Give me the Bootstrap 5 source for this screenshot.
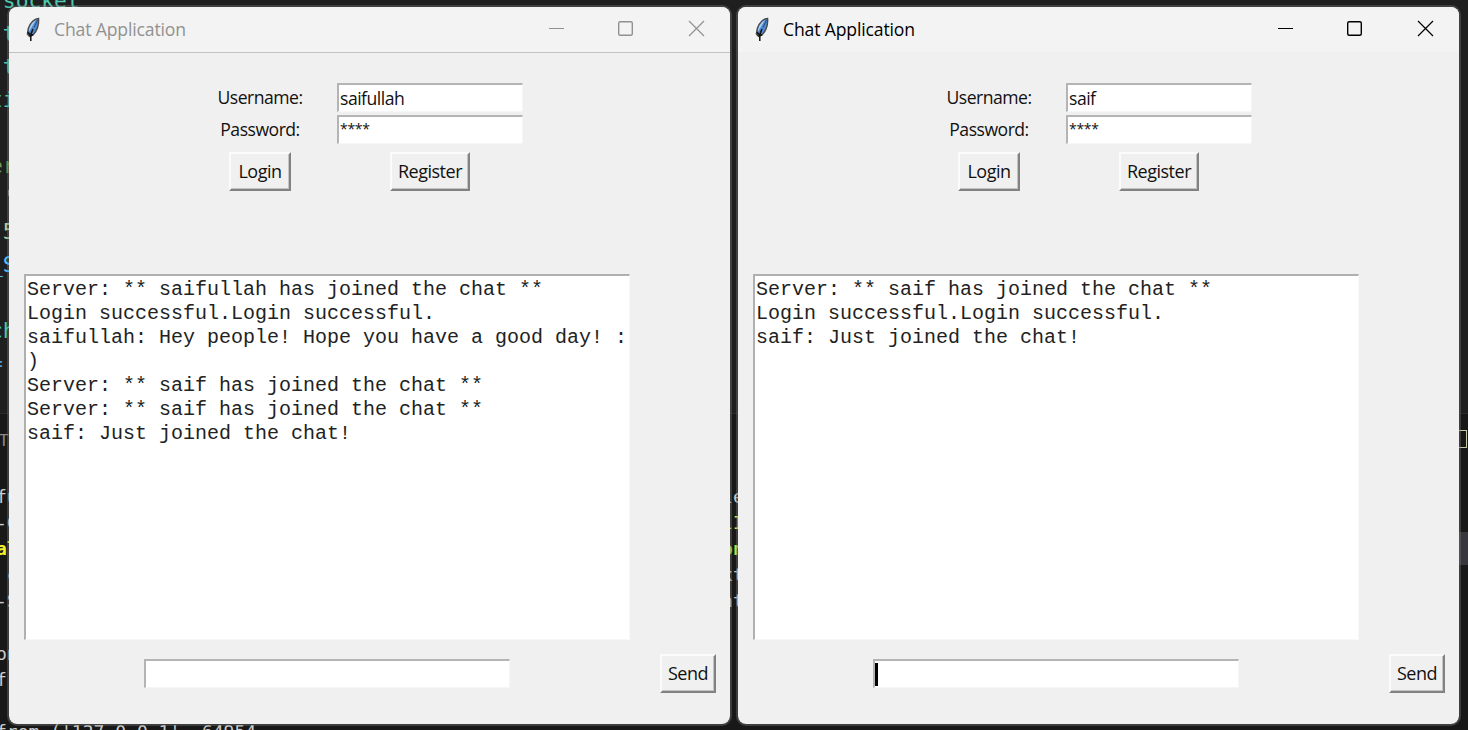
<!DOCTYPE html>
<html lang="en">
<head>
<meta charset="utf-8">
<title>Chat Application</title>
<link href="https://cdn.jsdelivr.net/npm/bootstrap@5.3.0/dist/css/bootstrap.min.css" rel="stylesheet">
<style>
body{width:1468px;height:730px;background:#1f1f1f;font-family:"Open Sans","Noto Sans",sans-serif;color:#111}
.desk-back{inset:0;font-family:"DejaVu Sans Mono",monospace;color:#ccc}
.desk-back pre{margin:0;overflow:visible;color:inherit;font-family:inherit}
.code-pane{height:414px;border-bottom:1px solid #2b2b2b}
.code-pane pre{font-size:21.3px;line-height:33px;margin:-16px 0 0 -10px;color:#4ec9b0}
.term-pane{height:316px;background:#181818}
.term-pane pre{font-size:18px;line-height:26.1px;margin-left:-4px}
.term-tab{height:70px;font-size:16px;line-height:54px;color:#8a8a8a;margin-left:-1px}
.c-green{color:#6a9955}.c-orange{color:#ce9178}.c-num{color:#b5cea8}.c-blue{color:#4fc1ff}.c-kw{color:#569cd6}.c-yel{color:#f0f02a}.c-lime{color:#b9e636}
.tree-row{right:0;top:532px;width:10px;height:33px;background:#37373d}
.square-mark{right:1px;top:430px;width:17px;height:18px;border:1px solid #c8c8a8}
.desktop{padding:5px 6px 4px 7px;gap:4px}
.app-win{width:725px;height:721px;border:2px solid rgba(117,117,117,.4);border-radius:10px;background:#f0f0f0;background-clip:padding-box;overflow:hidden}
.title-row{height:46px;background:#f3f3f3;border-bottom:1px solid #f0f0f0;padding:0 25px 2px 15px;color:#000}
.inactive .title-row{color:#919191;border-color:#c2c2c2}
.title-name{font-size:17.6px;letter-spacing:-.15px;margin-left:11px;line-height:24px}
.win-ctl{gap:53px}
.win-ctl svg:nth-child(2){margin:0 1px 0 -1px}
.login-grid{display:grid;grid-template-columns:154px 186px;grid-template-rows:29px 29px 40px;row-gap:2.5px;justify-items:center;padding:30px 0 0 174px;height:221px;align-content:start}
.login-grid .btn-row{margin-top:6px}
.tk-text{font-size:17.6px;letter-spacing:-.5px;line-height:29px}
.tk-field{border:solid #f6f6f6;border-width:2px 1px 1px 2px;border-top-color:#b4b4b4;border-left-color:#b4b4b4;background:#fff;height:29px;width:186px;padding-left:1px;line-height:26px}
.tk-mask{font-size:14px;letter-spacing:-.3px;line-height:24px}
.tk-btn{font-size:18px;letter-spacing:-.5px;line-height:35px;height:39px;padding:0;border:2px solid #fbfbfb;border-right:2px solid #828282;border-bottom:2px solid #828282;box-shadow:inset -1px -1px #c4c4c4;border-radius:0;background:#f0f0f0;color:#111;white-space:nowrap}
.w-login{width:62px}.w-reg{width:80px}.w-send{width:56px}
.chat-log{width:606px;height:366px;margin:0 0 0 15px;border:solid #f8f8f8;border-width:2px 1px 1px 2px;border-top-color:#b0b0b0;border-left-color:#b0b0b0;background:#fff;padding:2px 0 0 1px;font:20px/24px "Liberation Mono",monospace;color:#222;overflow:hidden}
.send-row{padding:14px 14px 0 135px}
.msg-field{width:366px}
.caret-bar{width:3px;height:23px;background:#000;margin-left:-1px}
</style>
</head>
<body class="position-relative overflow-hidden m-0">
<div class="desk-back position-absolute overflow-hidden">
<div class="code-pane overflow-hidden"><pre> socket
 t
 t
ti

<span class="c-green">er</span>
 <span class="c-orange">'</span>
 <span class="c-num">5</span>
<span class="c-blue">_S</span>

ch
<span class="c-kw">=</span></pre></div>
<div class="term-pane overflow-hidden"><div class="term-tab">T</div><pre>fu                                                                 le
-C                                                                 <span class="c-yel">lI</span>
<b class="c-yel">al                                                                 <span class="c-lime">on</span></b>
 c                                                                 xt
-S                                                                 nt

on
fr

from ('127.0.0.1', 64954</pre></div>
<div class="tree-row position-absolute"></div><div class="square-mark position-absolute"></div>
</div>

<main class="desktop d-flex position-relative">
<section class="app-win inactive">
<header class="title-row d-flex align-items-center justify-content-between">
<div class="d-flex align-items-center">
<svg width="19" height="26" viewBox="0 0 19 26"><path d="M14.6 2.5C11 2.5 6.5 6 4.3 12.5L3.4 18 5.5 20.5 9 19C13 15 15 8 14.6 2.5Z" fill="#4f8ad0" stroke="#4a4a4a" stroke-width="1.4"/><path d="M12 4C8 6 5 11 4.8 16L9 9Z" fill="#a9cdef"/><path d="M13.5 4 10 11.5" fill="none" stroke="#234a80" stroke-width="1"/><path d="M9 13 6.8 18.5V25M4 16 6.6 20 9 18.5" fill="none" stroke="#111" stroke-width="1.5"/></svg>
<span class="title-name">Chat Application</span></div>
<div class="win-ctl d-flex" aria-hidden="true">
<svg width="17" height="17" viewBox="0 0 17 17" fill="none" stroke="currentColor"><path d="M1 8.5H16"/></svg>
<svg width="17" height="17" viewBox="0 0 17 17" fill="none" stroke="currentColor" stroke-width="1.4"><rect x="1.7" y="1.7" width="13.6" height="13.6" rx="1.5"/></svg>
<svg width="17" height="17" viewBox="0 0 17 17" fill="none" stroke="currentColor" stroke-width="1.2"><path d="M1 1 16 16M16 1 1 16"/></svg>
</div>
</header>
<div class="login-grid">
<label class="tk-text">Username:</label><div class="tk-field tk-text">saifullah</div>
<label class="tk-text">Password:</label><div class="tk-field tk-mask">****</div>
<div class="btn-row"><button class="btn tk-btn w-login">Login</button></div><div class="btn-row"><button class="btn tk-btn w-reg">Register</button></div>
</div>
<pre class="chat-log">Server: ** saifullah has joined the chat **
Login successful.Login successful.
saifullah: Hey people! Hope you have a good day! :
)
Server: ** saif has joined the chat **
Server: ** saif has joined the chat **
saif: Just joined the chat!</pre>
<div class="send-row d-flex justify-content-between align-items-center"><div class="tk-field msg-field"></div><button class="btn tk-btn w-send">Send</button></div>
</section>

<section class="app-win">
<header class="title-row d-flex align-items-center justify-content-between">
<div class="d-flex align-items-center">
<svg width="19" height="26" viewBox="0 0 19 26"><path d="M14.6 2.5C11 2.5 6.5 6 4.3 12.5L3.4 18 5.5 20.5 9 19C13 15 15 8 14.6 2.5Z" fill="#4f8ad0" stroke="#4a4a4a" stroke-width="1.4"/><path d="M12 4C8 6 5 11 4.8 16L9 9Z" fill="#a9cdef"/><path d="M13.5 4 10 11.5" fill="none" stroke="#234a80" stroke-width="1"/><path d="M9 13 6.8 18.5V25M4 16 6.6 20 9 18.5" fill="none" stroke="#111" stroke-width="1.5"/></svg>
<span class="title-name">Chat Application</span></div>
<div class="win-ctl d-flex" aria-hidden="true">
<svg width="17" height="17" viewBox="0 0 17 17" fill="none" stroke="currentColor"><path d="M1 8.5H16"/></svg>
<svg width="17" height="17" viewBox="0 0 17 17" fill="none" stroke="currentColor" stroke-width="1.4"><rect x="1.7" y="1.7" width="13.6" height="13.6" rx="1.5"/></svg>
<svg width="17" height="17" viewBox="0 0 17 17" fill="none" stroke="currentColor" stroke-width="1.2"><path d="M1 1 16 16M16 1 1 16"/></svg>
</div>
</header>
<div class="login-grid">
<label class="tk-text">Username:</label><div class="tk-field tk-text">saif</div>
<label class="tk-text">Password:</label><div class="tk-field tk-mask">****</div>
<div class="btn-row"><button class="btn tk-btn w-login">Login</button></div><div class="btn-row"><button class="btn tk-btn w-reg">Register</button></div>
</div>
<pre class="chat-log">Server: ** saif has joined the chat **
Login successful.Login successful.
saif: Just joined the chat!</pre>
<div class="send-row d-flex justify-content-between align-items-center"><div class="tk-field msg-field d-flex align-items-center"><div class="caret-bar"></div></div><button class="btn tk-btn w-send">Send</button></div>
</section>
</main>
<script src="https://cdn.jsdelivr.net/npm/bootstrap@5.3.0/dist/js/bootstrap.bundle.min.js"></script>
</body>
</html>
